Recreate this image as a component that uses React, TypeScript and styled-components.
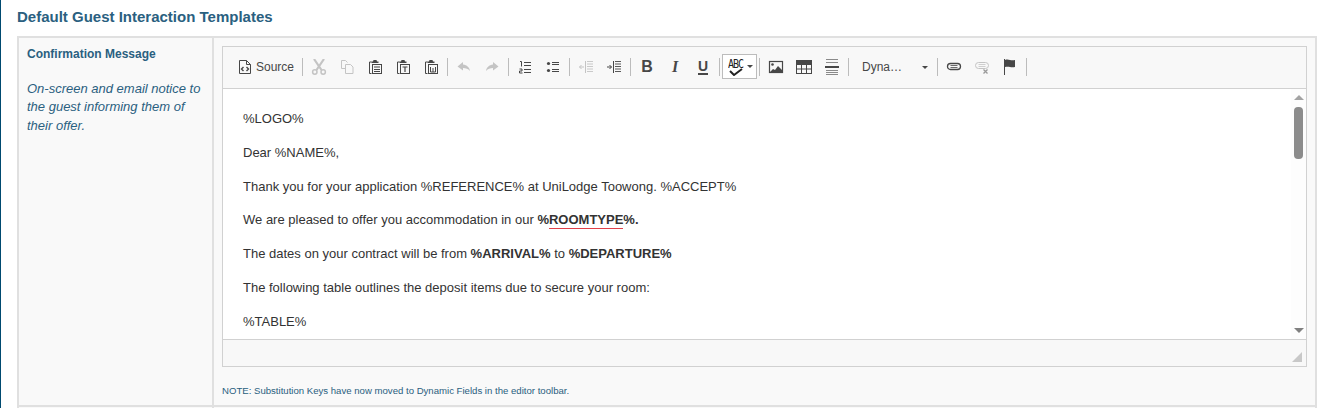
import React from 'react';
import styled, { createGlobalStyle } from 'styled-components';

const GlobalStyle = createGlobalStyle`
  html, body {
    margin: 0;
    padding: 0;
    height: 408px;
    overflow: hidden;
    background: #fff;
    font-family: "Liberation Sans", Arial, sans-serif;
  }
`;

const Page = styled.div`
  height: 408px;
  box-sizing: border-box;
  border-left: 1px solid #004a70;
  padding-left: 16px;
  overflow: hidden;
`;

const Title = styled.h2`
  margin: 0;
  height: 36px;
  box-sizing: border-box;
  padding-top: 9px;
  font-size: 15px;
  line-height: 16px;
  font-weight: bold;
  color: #2a6080;
`;

const Table = styled.div`
  border: 2px solid #e0e0e0;
  border-bottom: none;
  display: grid;
  grid-template-columns: 195px 1fr;
  background: #f9f9f9;
`;

const LabelCell = styled.div`
  padding: 8px;
  border-right: 2px solid #e0e0e0;
  border-bottom: 2px solid #e0e0e0;
  color: #2a6080;
`;

const FieldCell = styled.div`
  padding: 8px 8px 0;
  height: 369px;
  box-sizing: border-box;
  border-bottom: 2px solid #e0e0e0;
`;

const LabelTitle = styled.div`
  font-size: 12px;
  line-height: 16px;
  font-weight: bold;
`;

const LabelHint = styled.div`
  margin-top: 18px;
  font-size: 13px;
  line-height: 18.4px;
  font-style: italic;
`;

const EmptyCell = styled.div<{ $left?: boolean }>`
  height: 20px;
  border-right: ${(p) => (p.$left ? '2px solid #e0e0e0' : 'none')};
`;

const Editor = styled.div`
  border: 1px solid #d1d1d1;
  display: flex;
  flex-direction: column;
  height: 321px;
  box-sizing: border-box;
`;

const Toolbar = styled.div`
  height: 42px;
  flex: none;
  box-sizing: border-box;
  padding: 8px 0 0 8px;
  background: #f8f8f8;
  border-bottom: 1px solid #d1d1d1;
  display: flex;
  align-items: flex-start;
`;

const ToolButton = styled.span<{ $off?: boolean }>`
  width: 28px;
  height: 24px;
  flex: none;
  display: flex;
  align-items: center;
  justify-content: center;
  color: ${(p) => (p.$off ? '#c4c4c4' : '#474747')};
`;

const SourceButton = styled.span`
  width: 69px;
  height: 24px;
  flex: none;
  box-sizing: border-box;
  padding-left: 6px;
  display: flex;
  align-items: center;
  gap: 3px;
  font-size: 12px;
  color: #474747;
`;

const Separator = styled.span`
  width: 1px;
  height: 18px;
  margin: 3px 2px 0;
  background: #bcbcbc;
  flex: none;
`;

const SpellButton = styled.span`
  width: 35px;
  height: 25px;
  margin-top: -1px;
  flex: none;
  box-sizing: border-box;
  border: 1px solid #bcbcbc;
  background: #fff;
  padding-left: 5px;
  display: flex;
  align-items: center;
  gap: 3px;
  color: #474747;
`;

const SpellIcon = styled.span`
  width: 16px;
  height: 18px;
  display: block;
  position: relative;
`;

const SpellLetters = styled.span`
  position: absolute;
  left: 0;
  top: -1px;
  font-family: "DejaVu Sans Mono", monospace;
  font-size: 10px;
  line-height: 11px;
  letter-spacing: -1px;
  color: #222;
  transform: scaleY(1.2);
  transform-origin: top left;
`;

const Caret = styled.span`
  width: 0;
  height: 0;
  border-left: 3px solid transparent;
  border-right: 3px solid transparent;
  border-top: 3px solid #474747;
  flex: none;
`;

const Combo = styled.span`
  width: 84px;
  height: 24px;
  flex: none;
  box-sizing: border-box;
  padding: 0 7px 0 11px;
  display: flex;
  align-items: center;
  justify-content: space-between;
  font-size: 12px;
  color: #474747;
`;

const Glyph = styled.span<{ $kind: 'bold' | 'italic' | 'under' }>`
  font-family: ${(p) => (p.$kind === 'italic' ? '"Liberation Serif", serif' : '"Liberation Sans", sans-serif')};
  font-weight: bold;
  font-style: ${(p) => (p.$kind === 'italic' ? 'italic' : 'normal')};
  font-size: ${(p) => (p.$kind === 'under' ? 14 : 16)}px;
  line-height: 14px;
  color: #474747;
  border-bottom: ${(p) => (p.$kind === 'under' ? '2px solid #474747' : 'none')};
`;

const ContentRow = styled.div`
  height: 250px;
  flex: none;
  display: flex;
  background: #fff;
`;

const Content = styled.div`
  flex: 1;
  overflow: hidden;
  padding: 20px 20px 0;
  font-size: 13px;
  line-height: 20.8px;
  color: #333;
`;

const Para = styled.p`
  margin: 0 0 13px;
`;

const Misspelled = styled.span`
  padding-bottom: 1px;
  border-bottom: 1px solid #e0404a;
`;

const ScrollTrack = styled.div`
  width: 15px;
  flex: none;
  box-sizing: border-box;
  padding: 6px 3px 6px 3px;
  background: #fdfdfd;
  display: flex;
  flex-direction: column;
  align-items: center;
`;

const ArrowUp = styled.span`
  width: 0;
  height: 0;
  flex: none;
  border-left: 5px solid transparent;
  border-right: 5px solid transparent;
  border-bottom: 5px solid #a3a3a3;
`;

const ArrowDown = styled.span`
  width: 0;
  height: 0;
  flex: none;
  margin-top: auto;
  border-left: 5px solid transparent;
  border-right: 5px solid transparent;
  border-top: 5px solid #808080;
`;

const Thumb = styled.span`
  width: 9px;
  height: 52px;
  flex: none;
  margin-top: 7px;
  border-radius: 4px;
  background: #8c8c8c;
`;

const EditorFooter = styled.div`
  flex: 1;
  background: #f8f8f8;
  border-top: 1px solid #d1d1d1;
  box-sizing: border-box;
  display: flex;
  justify-content: flex-end;
  align-items: flex-end;
  padding: 0 4px 4px 0;
`;

const Note = styled.div`
  margin-top: 18px;
  font-size: 9.6px;
  line-height: 12px;
  color: #2a6080;
`;

type IconProps = { children: React.ReactNode };

const Icon = ({ children }: IconProps) => (
  <svg width="16" height="16" viewBox="0 0 16 16" fill="none" stroke="currentColor" strokeWidth="1">
    {children}
  </svg>
);

const SourceIcon = () => (
  <Icon>
    <path d="M2.500 1.500h7l4 4v9h-11z" />
    <path d="M9.500 1.500v4h4" />
    <path d="M6.500 8l-2 2 2 2M9.500 8l2 2-2 2" strokeWidth="1.400" />
  </Icon>
);

const CutIcon = () => (
  <Icon>
    <path d="M3 0l7.500 11M13 0L5.500 11" strokeWidth="2.200" />
    <circle cx="3.800" cy="13" r="2.200" strokeWidth="1.500" />
    <circle cx="12.200" cy="13" r="2.200" strokeWidth="1.500" />
  </Icon>
);

const CopyIcon = () => (
  <Icon>
    <path d="M6.500 9.500H2.500v-8h4l2 2" />
    <path d="M6.500 5.500h5l2.500 2.500v6.500H6.500z" />
  </Icon>
);

const PasteFrame = ({ children }: IconProps) => (
  <Icon>
    <path d="M4.500 3H2.500v11.500h2" />
    <path d="M4.500 4V2.500h1.500l.5-1.500h3l.5 1.500h1.500V4z" fill="currentColor" stroke="none" />
    <rect x="5.500" y="5.500" width="9" height="9" />
    {children}
  </Icon>
);

const PasteIcon = () => (
  <PasteFrame>
    <path d="M7 8h6M7 10.500h6M7 12.500h6" />
  </PasteFrame>
);

const PasteTextIcon = () => (
  <PasteFrame>
    <path d="M7.500 8h5M10 8v5" strokeWidth="1.200" />
  </PasteFrame>
);

const PasteWordIcon = () => (
  <PasteFrame>
    <path d="M7.500 8v5h5V8M10 9v4" />
  </PasteFrame>
);

const UndoIcon = () => (
  <Icon>
    <path d="M7 3L1.500 7.500 7 11.500V9c3 0 5 .8 7 3-.5-3.500-3-6-7-6.500z" fill="currentColor" stroke="none" />
  </Icon>
);

const RedoIcon = () => (
  <Icon>
    <path d="M9 3l5.500 4.500L9 11.500V9c-3 0-5 .8-7 3 .5-3.500 3-6 7-6.500z" fill="currentColor" stroke="none" />
  </Icon>
);

const NumberListIcon = () => (
  <Icon>
    <path d="M3 2.500h1.500v5" />
    <path d="M2.500 10h2.500v2h-2.500v2h3" />
    <path d="M7 3.500h7M7 6.500h7M7 10.500h7M7 13.500h7" />
  </Icon>
);

const BulletListIcon = () => (
  <Icon>
    <circle cx="3.500" cy="4.500" r="1.600" fill="currentColor" stroke="none" />
    <circle cx="3.500" cy="11.500" r="1.600" fill="currentColor" stroke="none" />
    <path d="M7 3.500h7M7 5.500h7M7 10.500h7M7 12.500h7" />
  </Icon>
);

const OutdentIcon = () => (
  <Icon>
    <path d="M7.500 2v12" />
    <path d="M9 2.500h6M9 5h6M9 7.500h6M9 10h6M9 12.500h6" strokeWidth="0.900" />
    <path d="M6 8H1.500M3.500 6l-2 2 2 2" />
  </Icon>
);

const IndentIcon = () => (
  <Icon>
    <path d="M7.500 2v12" />
    <path d="M9 2.500h6M9 5h6M9 7.500h6M9 10h6M9 12.500h6" strokeWidth="0.900" />
    <path d="M1 8h4.500M3.500 6l2 2-2 2" />
  </Icon>
);

const ImageIcon = () => (
  <Icon>
    <rect x="1.500" y="2.500" width="13" height="11" strokeWidth="1.200" />
    <circle cx="4.500" cy="5.500" r="1.300" fill="currentColor" stroke="none" />
    <path d="M2 13l3-3 2 1 3-4 4 4v2z" fill="currentColor" stroke="none" />
  </Icon>
);

const TableIcon = () => (
  <Icon>
    <rect x="0.500" y="1.500" width="15" height="13" />
    <rect x="0.500" y="1.500" width="15" height="4" fill="currentColor" />
    <path d="M5.500 5.500v9M10.500 5.500v9M.5 10h15" />
  </Icon>
);

const RuleIcon = () => (
  <Icon>
    <path d="M2 .5h12M2 3.500h12M2 11.500h12M2 13.500h12M2 15.500h12" stroke="#8a8a8a" />
    <path d="M1 8h14" strokeWidth="2" />
  </Icon>
);

const LinkIcon = () => (
  <Icon>
    <rect x="1.500" y="4.500" width="13" height="6" rx="3" strokeWidth="1.300" />
    <path d="M4.500 6.500h7M4.500 8.500h7" strokeWidth="0.800" />
  </Icon>
);

const UnlinkIcon = () => (
  <Icon>
    <rect x="1.500" y="3.500" width="13" height="6" rx="3" />
    <path d="M4.500 5.500h7M4.500 7.500h7" strokeWidth="0.800" />
    <path d="M9.500 10.500l4 4M13.500 10.500l-4 4" stroke="#9a9a9a" strokeWidth="1.300" />
  </Icon>
);

const FlagIcon = () => (
  <Icon>
    <path d="M2.500 0v16" />
    <path d="M3 1c2-.8 3.500-.4 5 0s3 .5 5 0v7c-2 .5-3.500.4-5 0s-3-.5-5 0z" fill="currentColor" stroke="none" />
  </Icon>
);

const CheckMark = () => (
  <svg width="16" height="8" viewBox="0 0 16 8" style={{ position: 'absolute', left: 1, top: 10 }}>
    <path d="M1 3l4 4L13 1" fill="none" stroke="#222" strokeWidth="2" />
  </svg>
);

const paragraphs: React.ReactNode[] = [
  '%LOGO%',
  'Dear %NAME%,',
  'Thank you for your application %REFERENCE% at UniLodge Toowong. %ACCEPT%',
  <>
    We are pleased to offer you accommodation in our{' '}
    <b>
      %<Misspelled>ROOMTYPE</Misspelled>%.
    </b>
  </>,
  <>
    The dates on your contract will be from <b>%ARRIVAL%</b> to <b>%DEPARTURE%</b>
  </>,
  'The following table outlines the deposit items due to secure your room:',
  '%TABLE%',
];

export default function App() {
  return (
    <Page>
      <GlobalStyle />
      <Title>Default Guest Interaction Templates</Title>
      <Table>
        <LabelCell>
          <LabelTitle>Confirmation Message</LabelTitle>
          <LabelHint>On-screen and email notice to the guest informing them of their offer.</LabelHint>
        </LabelCell>
        <FieldCell>
          <Editor>
            <Toolbar>
              <SourceButton>
                <SourceIcon />
                Source
              </SourceButton>
              <Separator />
              <ToolButton $off><CutIcon /></ToolButton>
              <ToolButton $off><CopyIcon /></ToolButton>
              <ToolButton><PasteIcon /></ToolButton>
              <ToolButton><PasteTextIcon /></ToolButton>
              <ToolButton><PasteWordIcon /></ToolButton>
              <Separator />
              <ToolButton $off><UndoIcon /></ToolButton>
              <ToolButton $off><RedoIcon /></ToolButton>
              <Separator />
              <ToolButton><NumberListIcon /></ToolButton>
              <ToolButton><BulletListIcon /></ToolButton>
              <Separator />
              <ToolButton $off><OutdentIcon /></ToolButton>
              <ToolButton><IndentIcon /></ToolButton>
              <Separator />
              <ToolButton><Glyph $kind="bold">B</Glyph></ToolButton>
              <ToolButton><Glyph $kind="italic">I</Glyph></ToolButton>
              <ToolButton><Glyph $kind="under">U</Glyph></ToolButton>
              <Separator />
              <SpellButton>
                <SpellIcon>
                  <SpellLetters>ABC</SpellLetters>
                  <CheckMark />
                </SpellIcon>
                <Caret />
              </SpellButton>
              <Separator />
              <ToolButton><ImageIcon /></ToolButton>
              <ToolButton><TableIcon /></ToolButton>
              <ToolButton><RuleIcon /></ToolButton>
              <Separator />
              <Combo>
                Dyna…
                <Caret />
              </Combo>
              <Separator />
              <ToolButton><LinkIcon /></ToolButton>
              <ToolButton $off><UnlinkIcon /></ToolButton>
              <ToolButton><FlagIcon /></ToolButton>
              <Separator />
            </Toolbar>
            <ContentRow>
              <Content>
                {paragraphs.map((text, i) => (
                  <Para key={i}>{text}</Para>
                ))}
              </Content>
              <ScrollTrack>
                <ArrowUp />
                <Thumb />
                <ArrowDown />
              </ScrollTrack>
            </ContentRow>
            <EditorFooter>
              <svg width="10" height="10" viewBox="0 0 10 10">
                <path d="M10 0v10H0z" fill="#c8c8c8" />
              </svg>
            </EditorFooter>
          </Editor>
          <Note>NOTE: Substitution Keys have now moved to Dynamic Fields in the editor toolbar.</Note>
        </FieldCell>
        <EmptyCell $left />
        <EmptyCell />
      </Table>
    </Page>
  );
}
